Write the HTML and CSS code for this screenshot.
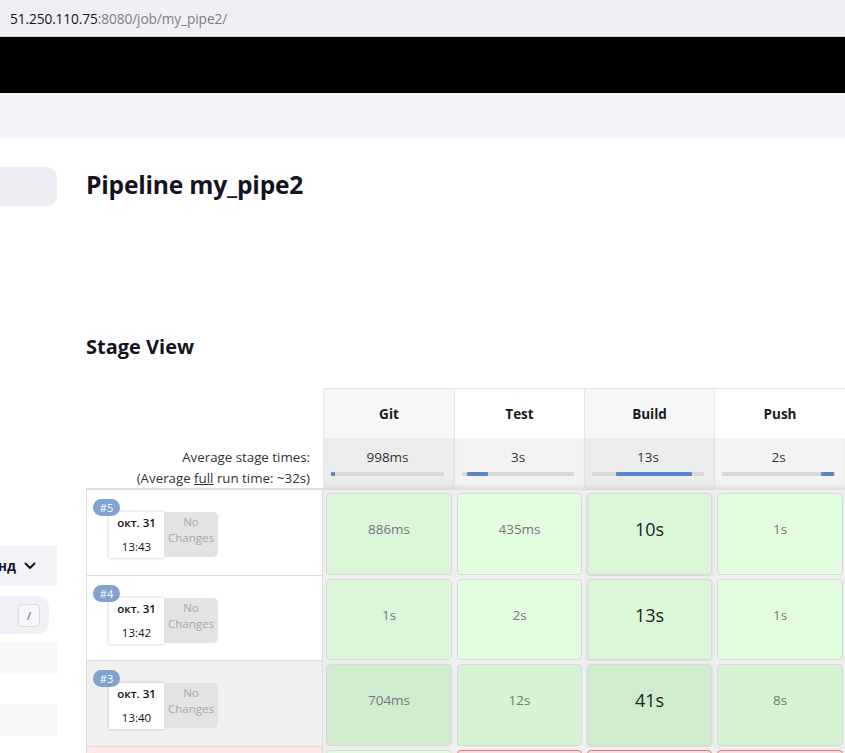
FILE: index.html
```html
<!DOCTYPE html>
<html>
<head>
<meta charset="utf-8">
<link rel="stylesheet" href="styles.css">
</head>
<body>
<div class="urlbar"><span class="host">51.250.110.75</span><span class="path">:8080/job/my_pipe2/</span></div>
<div class="blackbar"></div>
<div class="crumbs"></div>
<div class="page">
  <aside class="side">
    <div class="side-item first"></div>
    <div class="side-spacer"></div>
    <div class="side-item menu"><span class="menu-text">нд</span><svg class="chev" width="12" height="8" viewBox="0 0 12 8"><path d="M1.5 1.5 L6 6 L10.5 1.5" fill="none" stroke="#111" stroke-width="1.8" stroke-linecap="round" stroke-linejoin="round"/></svg></div>
    <div class="side-search"><span class="kbd">/</span></div>
    <div class="side-item plain"></div>
    <div class="side-gap"></div>
    <div class="side-item plain"></div>
  </aside>
  <main class="content">
    <h1 class="title">Pipeline my_pipe2</h1>
    <h2 class="subtitle">Stage View</h2>
    <div class="stage-view">
      <div class="grid">
        <div class="corner"></div>
        <div class="head c-dark">Git</div>
        <div class="head c-light">Test</div>
        <div class="head c-dark">Build</div>
        <div class="head c-light">Push</div>

        <div class="avg-label"><div>Average stage times:</div><div>(Average <u>full</u> run time: ~32s)</div></div>
        <div class="avg a-dark"><div class="avg-time">998ms</div><div class="bar"><span class="fill" style="left:0;width:4px"></span></div></div>
        <div class="avg a-light"><div class="avg-time">3s</div><div class="bar"><span class="fill" style="left:5px;width:21px"></span></div></div>
        <div class="avg a-dark"><div class="avg-time">13s</div><div class="bar"><span class="fill" style="left:24px;width:76px"></span></div></div>
        <div class="avg a-light"><div class="avg-time">2s</div><div class="bar"><span class="fill" style="left:99px;width:13px"></span></div></div>

        <div class="run">
          <span class="badge">#5</span>
          <div class="runbox"><div class="date"><div>окт. 31</div><div>13:43</div></div><div class="changes">No<br>Changes</div></div>
        </div>
        <div class="cellwrap"><div class="cell g1">886ms</div></div>
        <div class="cellwrap"><div class="cell g2">435ms</div></div>
        <div class="cellwrap"><div class="cell g1 big">10s</div></div>
        <div class="cellwrap"><div class="cell g2">1s</div></div>

        <div class="run">
          <span class="badge">#4</span>
          <div class="runbox"><div class="date"><div>окт. 31</div><div>13:42</div></div><div class="changes">No<br>Changes</div></div>
        </div>
        <div class="cellwrap"><div class="cell g1">1s</div></div>
        <div class="cellwrap"><div class="cell g2">2s</div></div>
        <div class="cellwrap"><div class="cell g1 big">13s</div></div>
        <div class="cellwrap"><div class="cell g2">1s</div></div>

        <div class="run grey">
          <span class="badge">#3</span>
          <div class="runbox"><div class="date"><div>окт. 31</div><div>13:40</div></div><div class="changes">No<br>Changes</div></div>
        </div>
        <div class="cellwrap"><div class="cell h1">704ms</div></div>
        <div class="cellwrap"><div class="cell h2">12s</div></div>
        <div class="cellwrap"><div class="cell h1 big">41s</div></div>
        <div class="cellwrap"><div class="cell h2">8s</div></div>

        <div class="run red"></div>
        <div class="cellwrap"><div class="cell g2"></div></div>
        <div class="cellwrap"><div class="cell r1"></div></div>
        <div class="cellwrap"><div class="cell r1"></div></div>
        <div class="cellwrap"><div class="cell r1"></div></div>
      </div>
    </div>
  </main>
</div>
</body>
</html>
```

FILE: styles.css
```css
html, body {
  margin: 0;
  padding: 0;
  background: #fff;
  overflow: hidden;
}
body {
  width: 845px;
  height: 753px;
  font-family: "Open Sans", "Noto Sans", sans-serif;
  color: #14141f;
}
.urlbar {
  height: 36px;
  background: #f0f0f4;
  border-bottom: 1px solid #cfcfd6;
  box-sizing: content-box;
  padding-left: 10px;
  display: flex;
  align-items: center;
  font-size: 13.7px;
  letter-spacing: -0.1px;
}
.host { color: #15141a; }
.path { color: #7d7d85; }
.blackbar {
  height: 56px;
  background: #000;
}
.crumbs {
  height: 46px;
  background: #f5f5f9;
}
.page {
  display: flex;
  align-items: flex-start;
}
.side {
  width: 57px;
  flex: none;
  padding-top: 28px;
  display: flex;
  flex-direction: column;
}
.side-item {
  width: 57px;
  box-sizing: border-box;
}
.side-item.first {
  height: 39px;
  background: #ededf3;
  border-radius: 0 10px 10px 0;
}
.side-spacer { height: 340px; }
.side-item.menu {
  height: 40px;
  background: #f2f2f7;
  display: flex;
  align-items: center;
  justify-content: flex-end;
  padding-right: 21px;
  white-space: nowrap;
}
.menu-text {
  font-weight: 700;
  font-size: 13.5px;
  margin-right: 8px;
  color: #14141f;
}
.chev { flex: none; }
.side-search {
  margin-top: 10px;
  width: 49px;
  height: 38px;
  background: #f0f0f5;
  border-radius: 0 12px 12px 0;
  display: flex;
  align-items: center;
  justify-content: flex-end;
  padding-right: 9px;
  box-sizing: border-box;
}
.kbd {
  width: 20px;
  height: 21px;
  border: 1px solid #dcdce2;
  border-radius: 4px;
  background: #f7f7fa;
  font-size: 11px;
  color: #555;
  display: flex;
  align-items: center;
  justify-content: center;
}
.side-item.plain {
  height: 32px;
  background: #f7f7f8;
  margin-top: 8px;
}
.side-gap { height: 22px; }

.content {
  margin-left: 29px;
  flex: 1;
  min-width: 0;
}
.title {
  margin: 29px 0 0 0;
  font-size: 24.6px;
  line-height: 34px;
  font-weight: 700;
  letter-spacing: -0.2px;
  color: #14141f;
}
.subtitle {
  margin: 131px 0 0 0;
  font-size: 20px;
  line-height: 28px;
  font-weight: 700;
  color: #14141f;
}
.stage-view {
  margin-top: 27px;
  overflow: hidden;
}
.grid {
  display: grid;
  grid-template-columns: 237px 131px 130px 130px 131px;
  grid-template-rows: 50px 52px 86px 85px 86px 40px;
  width: 759px;
}
.corner { background: #fff; }
.head {
  display: flex;
  align-items: center;
  justify-content: center;
  font-size: 13.5px;
  font-weight: 700;
  color: #1a1a1a;
  border-top: 1px solid #e4e4e4;
  border-left: 1px solid #e8e8e8;
  box-sizing: border-box;
}
.head.c-dark { background: #f7f7f7; }
.head.c-light { background: #fff; }
.avg-label {
  text-align: right;
  padding-right: 13px;
  padding-top: 9px;
  font-size: 13.3px;
  line-height: 21px;
  color: #333;
  border-bottom: 2px solid #dedede;
}
.avg-label u { text-decoration: underline; }
.avg {
  box-sizing: border-box;
  border-left: 1px solid #e2e2e2;
  padding: 9px 10px 0 7px;
  text-align: center;
  box-shadow: inset 0 -6px 6px -4px rgba(0,0,0,0.12);
}
.avg.a-dark { background: #ececec; }
.avg.a-light { background: #f3f3f3; }
.avg-time {
  font-size: 13.5px;
  line-height: 20px;
  color: #333;
}
.bar {
  position: relative;
  margin-top: 5px;
  height: 4px;
  background: #d9d9d9;
}
.fill {
  position: absolute;
  top: 0;
  height: 4px;
  background: #5b87c9;
  border-radius: 1px;
}
.run {
  position: relative;
  background: #fff;
  border: 1px solid #dcdcdc;
  border-top: none;
  box-sizing: border-box;
  padding: 22px 0 0 22px;
}
.run.grey { background: #f0f0f0; }
.run.red { background: #ffe8e6; }
.badge {
  position: absolute;
  left: 6px;
  top: 9px;
  width: 27px;
  height: 17px;
  border-radius: 9px;
  background: #7fa2cf;
  color: #fff;
  font-size: 11px;
  line-height: 17px;
  text-align: center;
  z-index: 2;
}
.runbox {
  display: flex;
  width: 110px;
  height: 46px;
}
.date {
  width: 55px;
  background: #fff;
  box-shadow: 0 0 3px rgba(0,0,0,0.25);
  font-size: 11.5px;
  line-height: 24px;
  text-align: center;
  color: #111;
  display: flex;
  flex-direction: column;
  justify-content: center;
}
.date div:first-child { font-weight: 600; }
.changes {
  width: 54px;
  height: 45px;
  background: #e3e3e3;
  border-radius: 0 5px 5px 0;
  color: #a8a8a8;
  font-size: 11.5px;
  line-height: 16px;
  text-align: center;
  padding-top: 2px;
  box-sizing: border-box;
}
.cellwrap {
  background: #efefef;
  padding: 3px 2px 0 3px;
  box-sizing: border-box;
}
.cell {
  height: calc(100% - 1px);
  box-sizing: border-box;
  border: 1px solid #d6dcd5;
  border-radius: 4px;
  text-align: center;
  padding-top: 25px;
  font-size: 13.5px;
  line-height: 20px;
  color: #777;
}
.cell.big {
  font-size: 18px;
  color: #222;
  box-shadow: 0 1px 3px rgba(0,0,0,0.12);
}
.cell.g1 { background: #dcf6da; }
.cell.g2 { background: #e2fde0; }
.cell.h1 { background: #d1ebcf; }
.cell.h2 { background: #d7f2d5; }
.cell.r1 { background: #ffe0de; border-color: #d77b78; }
```
